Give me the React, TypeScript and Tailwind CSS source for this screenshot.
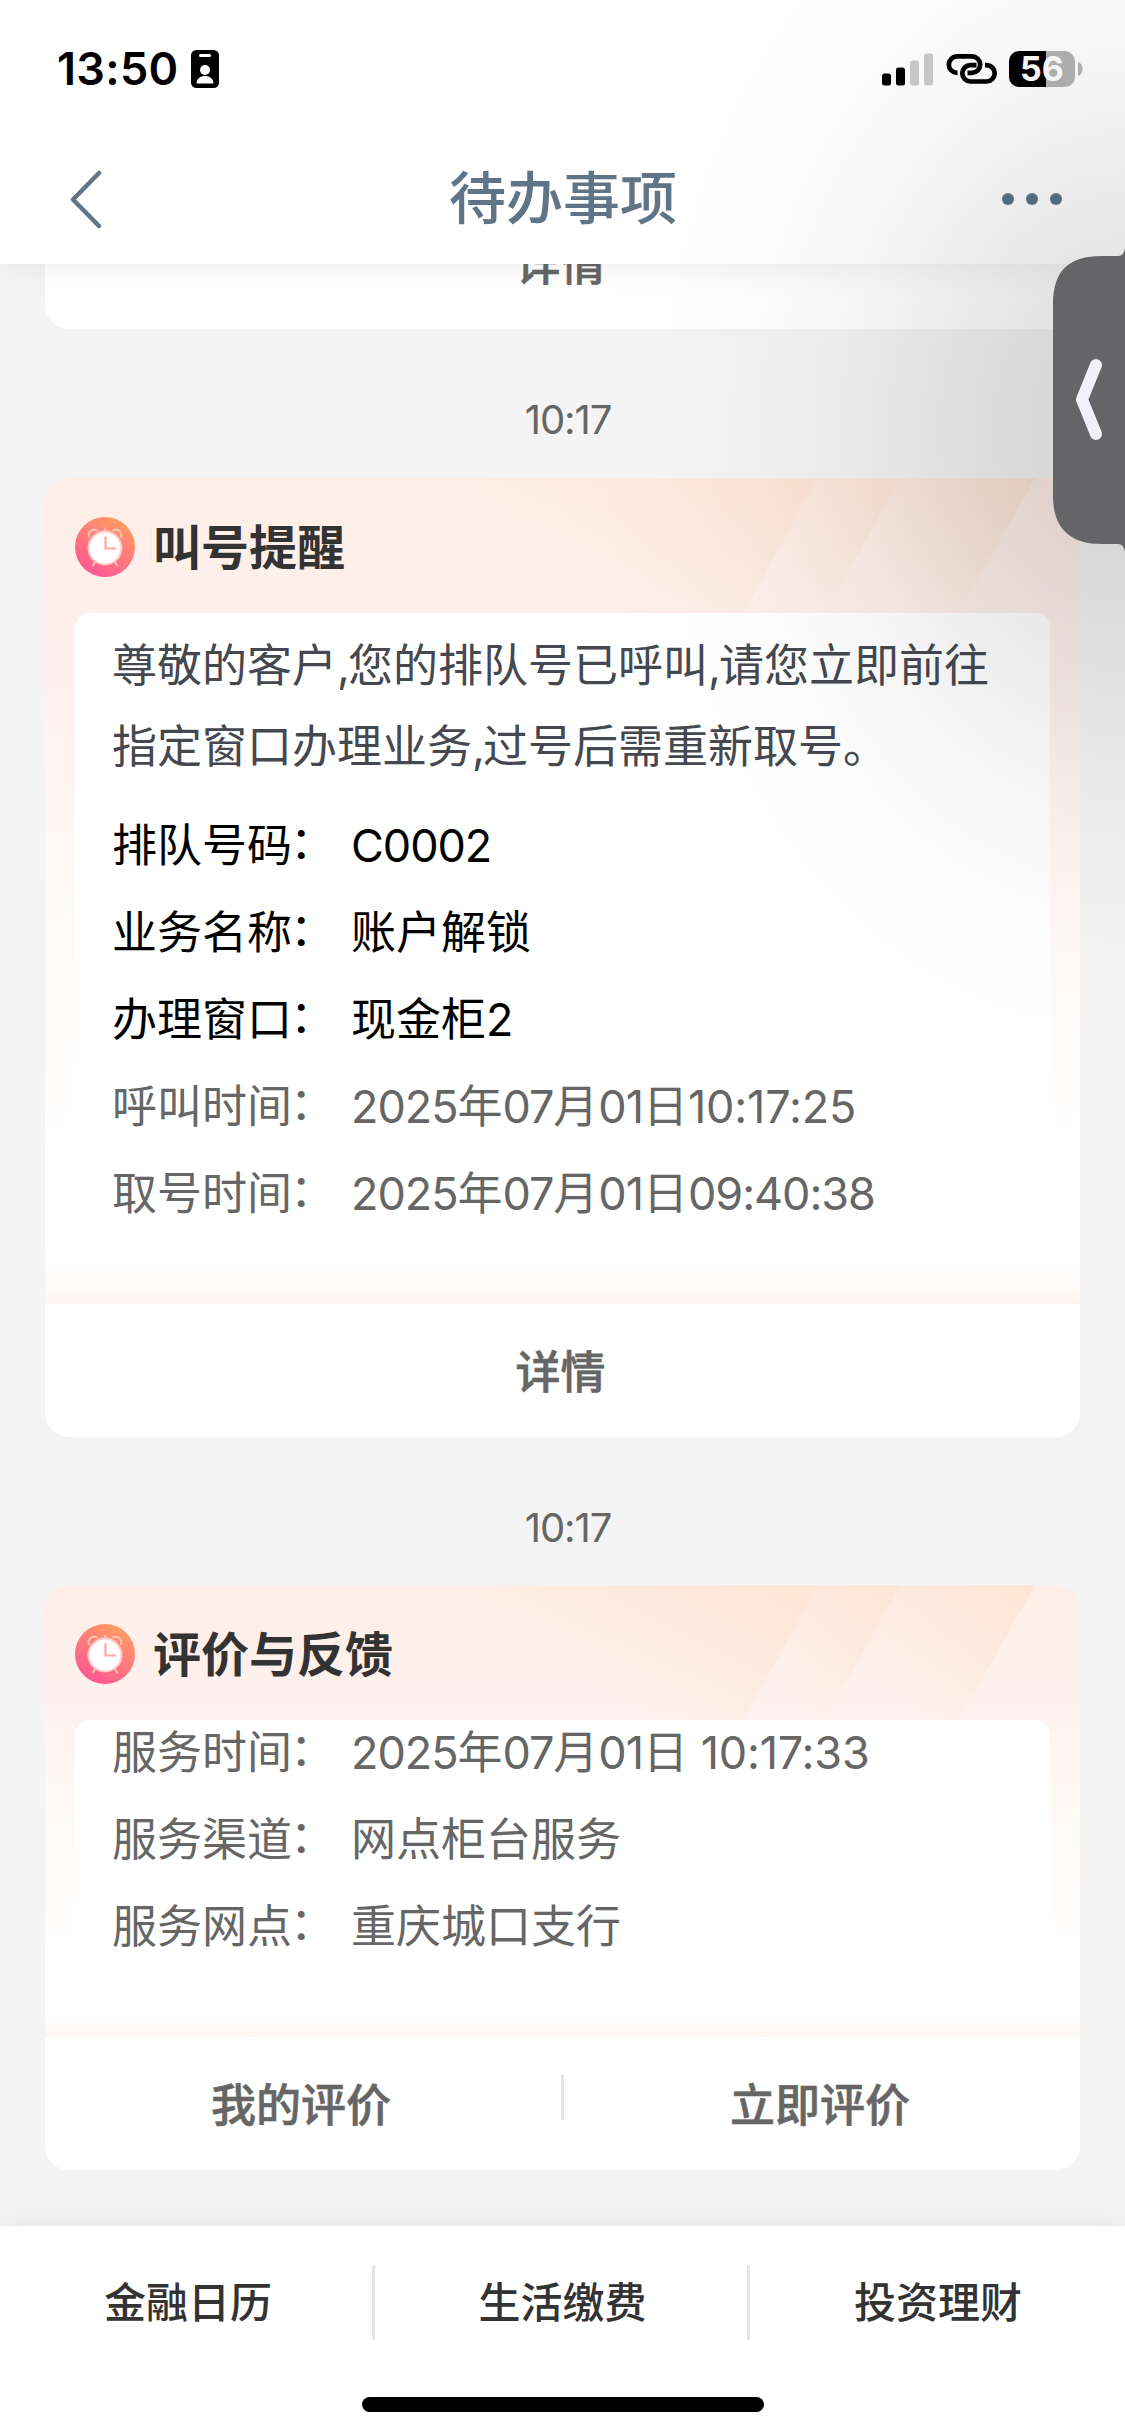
import React from "react";

type Row = { label: string; value: string; strong?: boolean };

function StatusBar() {
  return (
    <div className="flex h-[132px] items-start justify-between pl-[57px] pr-[42px] pt-[48px]">
      <div className="flex h-[42px] items-center">
        <span className="w-[122px] whitespace-nowrap text-[45px] font-semibold leading-[42px] tracking-[0.300px] text-black">13:50</span>
        <svg className="ml-[12px]" width="28" height="38" viewBox="0 0 28 38">
          <rect width="28" height="38" rx="5.5" fill="#000" />
          <rect x="8" y="4" width="12" height="3" rx="1.5" fill="#fff" />
          <circle cx="14" cy="20" r="5" fill="#fff" />
          <path d="M5.5 33.5c0-5 4-7.500 8.500-7.500s8.500 2.500 8.500 7.500z" fill="#fff" />
        </svg>
      </div>
      <div className="flex h-[42px] items-center">
        <svg width="51" height="34" viewBox="0 0 51 34">
          <rect x="0" y="21.500" width="9" height="12" rx="2.500" fill="#000" />
          <rect x="14" y="15.500" width="9" height="18" rx="2.500" fill="#000" />
          <rect x="28" y="8.500" width="9" height="25" rx="2.500" fill="#cbcbcb" />
          <rect x="42" y="1.500" width="9" height="32" rx="2.500" fill="#cbcbcb" />
        </svg>
        <svg className="ml-[13px]" width="53" height="32" viewBox="0 0 53 32" fill="none" stroke="#000" strokeWidth="4.700">
          <path d="M11.500 19.800H11A8.200 8.200 0 0 1 11 3.400H26A8.200 8.200 0 0 1 26 19.800H21.500" />
          <path d="M39 12.100H40.500A8.200 8.200 0 0 1 40.500 28.500H24.500A8.200 8.200 0 0 1 24.500 12.100H30.500" />
        </svg>
        <div className="ml-[10px] flex h-[36px] w-[66px] items-center justify-center rounded-[10px] bg-[linear-gradient(90deg,#000_37px,#b4b4b4_37px)]">
          <span className="text-[34px] font-bold leading-[36px] text-white">56</span>
        </div>
        <svg className="ml-[3px]" width="5" height="14" viewBox="0 0 5 14">
          <path d="M0 0C6 2 6 12 0 14z" fill="#b4b4b4" />
        </svg>
      </div>
    </div>
  );
}

function NavBar() {
  return (
    <div className="grid h-[132px] grid-cols-3 items-center pl-[68px] pr-[63px]">
      <svg className="relative left-px" width="34" height="60" viewBox="0 0 34 60" fill="none" stroke="#607587" strokeWidth="4.500" strokeLinecap="round" strokeLinejoin="round">
        <path d="M30 4L4 30.500L30 57" />
      </svg>
      <h1 className="whitespace-nowrap pr-[4px] pt-px text-center text-[57px] font-medium leading-[132px] text-[#5f7486]">待办事项</h1>
      <div className="flex justify-end gap-[12px]">
        <span className="size-[12px] rounded-full bg-[#587489]" />
        <span className="size-[12px] rounded-full bg-[#587489]" />
        <span className="size-[12px] rounded-full bg-[#587489]" />
      </div>
    </div>
  );
}

function ClockIcon() {
  return (
    <svg width="60" height="60" viewBox="0 0 60 60" fill="none">
      <defs>
        <linearGradient id="clock" x1="0.250" y1="1" x2="0.800" y2="0">
          <stop offset="0" stopColor="#ff5496" />
          <stop offset="1" stopColor="#ffa061" />
        </linearGradient>
      </defs>
      <circle cx="30" cy="30" r="30" fill="url(#clock)" />
      <g stroke="#ffc3b4" strokeWidth="2" strokeLinecap="round">
        <path d="M14 20A5.500 5.500 0 0 1 22 13.500M46 20A5.500 5.500 0 0 0 38 13.500M20 45L18 48.500M40 45L42 48.500M30 11.500V14" />
      </g>
      <circle cx="30" cy="31" r="16.500" fill="#fff" stroke="#ffc9c6" strokeWidth="2" />
      <path d="M30.500 19.500V31.500H41" stroke="#ffa79c" strokeWidth="2.200" />
    </svg>
  );
}

function Stripes() {
  return (
    <svg className="absolute left-0 top-0" width="1035" height="160" viewBox="0 0 1035 160">
      <defs>
        <linearGradient id="band" x1="0" y1="0.800" x2="1" y2="0.100">
          <stop offset="0.300" stopColor="#fde6d6" stopOpacity="0" />
          <stop offset="1" stopColor="#fde6d6" />
        </linearGradient>
      </defs>
      <path d="M440 0H773L685 160H440z" fill="url(#band)" />
      <path d="M773 0H855L767 160H685z" fill="url(#band)" />
      <path d="M855 0H990L900 160H767z" fill="url(#band)" />
    </svg>
  );
}

/* Latin runs are set slightly tighter than the surrounding Chinese text. */
function Mixed({ text }: { text: string }) {
  return (
    <>
      {text.split(/(\d+:[\d:]+|[A-Z0-9]+|,)/).map((part, i) => {
        if (part === ",") return <span key={i} className="tracking-[-2px]">{part}</span>;
        if (/^1\d:/.test(part)) return <span key={i} className="tracking-[-0.200px]">{part}</span>;
        if (/^[A-Z0-9]/.test(part)) return <span key={i} className="tracking-[-1.050px]">{part}</span>;
        return <React.Fragment key={i}>{part}</React.Fragment>;
      })}
    </>
  );
}

function DetailRow({ label, value, strong }: Row) {
  return (
    <div className={strong ? "flex h-[87px] items-center text-black" : "flex h-[87px] items-center text-[#666]"}>
      <span className="w-[180px] shrink-0">{label}</span>
      <span className="relative -left-[2px] -top-[3px] w-[59px] shrink-0">：</span>
      <span className="whitespace-pre"><Mixed text={value} /></span>
    </div>
  );
}

function Card({ title, children, actions }: { title: string; children: React.ReactNode; actions: string[] }) {
  return (
    <section className="overflow-hidden rounded-[24px] bg-white">
      <div className="relative bg-[linear-gradient(180deg,#feeee7_0%,#feefea_12%,#fef1ed_25%,#fff4f0_36%,#fffaf7_50%,#fff_86%,#fffefe_95%,#fffbf9_98%,#fef4f0_100%)]">
        <Stripes />
        <header className="relative flex h-[135px] items-center pl-[30px] pt-[2px]">
          <ClockIcon />
          <h2 className="ml-[18px] pt-[2px] text-[48px] font-semibold leading-[72px] text-[#333]">{title}</h2>
        </header>
        {children}
      </div>
      <footer className="flex h-[133px] items-center">
        {actions.map((a, i) => (
          <React.Fragment key={a}>
            {i > 0 && <span className="mb-[12px] h-[45px] w-[3px] bg-[#e5e5e5]" />}
            <span className="flex-1 pr-[4px] pt-[4px] text-center text-[45px] font-medium leading-[66px] text-[#666] [-webkit-text-stroke:0.600px_#666]">{a}</span>
          </React.Fragment>
        ))}
      </footer>
    </section>
  );
}

function TimeStamp({ children }: { children: string }) {
  return <p className="flex h-[148px] items-center justify-center pl-[11px] pt-[34px] text-[40px] tracking-[-1.100px] text-[#666]">{children}</p>;
}

const queueRows: Row[] = [
  { label: "排队号码", value: "C0002", strong: true },
  { label: "业务名称", value: "账户解锁", strong: true },
  { label: "办理窗口", value: "现金柜2", strong: true },
  { label: "呼叫时间", value: "2025年07月01日10:17:25" },
  { label: "取号时间", value: "2025年07月01日09:40:38" },
];

const serviceRows: Row[] = [
  { label: "服务时间", value: "2025年07月01日 10:17:33" },
  { label: "服务渠道", value: "网点柜台服务" },
  { label: "服务网点", value: "重庆城口支行" },
];

export default function App() {
  return (
    <div className="relative flex h-[2436px] w-[1125px] flex-col overflow-hidden bg-[#f4f4f4] font-['Inter','Noto_Sans_CJK_SC',sans-serif]">
      <div className="relative z-10 h-[264px] shrink-0 bg-white shadow-[0_0_36px_rgba(0,0,0,0.080)]">
        <StatusBar />
        <NavBar />
      </div>

      <main className="flex h-[1962px] shrink-0 flex-col overflow-hidden px-[45px]">
        <div className="-mt-[68px] flex h-[133px] shrink-0 items-center justify-center rounded-b-[24px] bg-white pr-[4px] pt-[4px] text-[45px] font-medium text-[#666] [-webkit-text-stroke:0.600px_#666]">
          详情
        </div>
        <TimeStamp>10:17</TimeStamp>
        <div className="h-px" />
        <Card title="叫号提醒" actions={["详情"]}>
          <div className="relative mx-[30px] h-[640px] rounded-t-[15px] bg-white pl-[37px] pt-[12px] text-[45px]">
            <p className="mb-[15px] whitespace-nowrap leading-[81px] text-[#45484f]">
              <Mixed text="尊敬的客户,您的排队号已呼叫,请您立即前往" />
              <br />
              <Mixed text="指定窗口办理业务,过号后需重新取号。" />
            </p>
            {queueRows.map((r) => (
              <DetailRow key={r.label} {...r} />
            ))}
          </div>
          <div className="h-[51px]" />
        </Card>
        <TimeStamp>10:17</TimeStamp>
        <Card title="评价与反馈" actions={["我的评价", "立即评价"]}>
          <div className="relative mx-[30px] h-[275px] rounded-t-[15px] bg-white pl-[37px] text-[45px]">
            <div className="-translate-y-[11px]">
              {serviceRows.map((r) => (
                <DetailRow key={r.label} {...r} />
              ))}
            </div>
          </div>
          <div className="h-[42px]" />
        </Card>
      </main>

      <nav className="relative z-10 flex h-[210px] shrink-0 flex-col items-center bg-white shadow-[0_0_36px_rgba(0,0,0,0.070)]">
        <div className="flex h-[152px] w-full items-center text-center text-[42px] font-medium text-[#333]">
          <span className="w-[372px] pl-[4px]">金融日历</span>
          <span className="h-[75px] w-[3px] bg-[#e5e5e5]" />
          <span className="w-[372px] pl-[3px]">生活缴费</span>
          <span className="h-[75px] w-[3px] bg-[#e5e5e5]" />
          <span className="flex-1 pl-px">投资理财</span>
        </div>
        <div className="mt-[19px] h-[15px] w-[402px] rounded-full bg-black" />
      </nav>

      <div className="pointer-events-none absolute inset-0 z-20 bg-[radial-gradient(ellipse_570px_740px_at_1125px_430px,rgba(0,0,0,0.130)_0%,rgba(0,0,0,0.114)_16.700%,rgba(0,0,0,0.077)_33.300%,rgba(0,0,0,0.040)_50%,rgba(0,0,0,0.016)_66.700%,rgba(0,0,0,0.005)_83.300%,rgba(0,0,0,0)_100%)]" />
      <svg className="absolute right-0 top-[248px] z-30" width="72" height="304" viewBox="0 0 72 304" fill="none">
        <path d="M72 0C71 6 69 8 64 8H48C17 8 0 22 0 56V248C0 280 17 296 48 296H64C69 296 71 298 72 304z" fill="#656567" />
        <path d="M43 117L29 151.500L43 186" stroke="#f0f0fa" strokeWidth="12" strokeLinecap="round" strokeLinejoin="round" />
      </svg>
    </div>
  );
}
